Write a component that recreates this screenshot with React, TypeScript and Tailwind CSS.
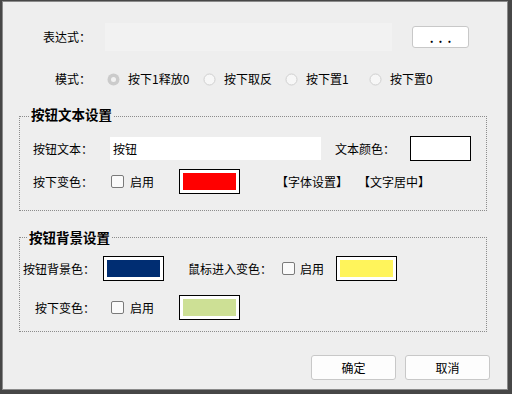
import React from "react";

const font = { fontFamily: '"Noto Sans CJK SC", "Noto Sans", sans-serif' };

function Radio({ checked, label, w }: { checked?: boolean; label: string; w: string }) {
  return (
    <div className={`flex items-center ${w}`}>
      <svg width="13" height="13" viewBox="0 0 13 13" className="shrink-0">
        {checked ? (
          <>
            <circle cx="6.5" cy="6.5" r="6" fill="#cbcbcb" />
            <circle cx="6.5" cy="6.5" r="2.5" fill="#f2f2f2" />
          </>
        ) : (
          <circle cx="6.5" cy="6.5" r="5.5" fill="#f7f7f7" stroke="#d0d0d0" strokeWidth="1" />
        )}
      </svg>
      <span className="ml-[8px] whitespace-nowrap">{label}</span>
    </div>
  );
}

function Check() {
  return <div className="w-[13px] h-[13px] shrink-0 rounded-[2px] border border-[#7a7a7a] bg-[#fafafa]" />;
}

function Swatch({ color }: { color: string }) {
  return (
    <div className="w-[61px] h-[25px] shrink-0 border border-black bg-white p-[3px]">
      <div className="w-full h-full" style={{ background: color }} />
    </div>
  );
}

export default function App() {
  return (
    <div
      className="w-[512px] h-[394px] flex border-l-2 border-t border-r-[4px] border-b-[4px] border-[#474747] text-[12px] text-black"
      style={font}
    >
      <div className="flex-1 h-full flex flex-col bg-[#eeeeee] border-l border-t border-r border-b border-[#8a8a8a]">
        {/* expression row */}
        <div className="mt-[21px] h-[28px] flex items-center">
          <div className="w-[88px] text-right leading-none">表达式：</div>
          <div className="ml-[14px] w-[287px] h-[28px] bg-[#f2f2f2]" />
          <button className="ml-[20px] w-[57px] h-[22px] rounded-[3px] border border-[#c8c8c8] bg-white flex items-center justify-center leading-none tracking-[5px] pl-[5px] pt-[2px] font-bold">
            ...
          </button>
        </div>

        {/* mode row */}
        <div className="mt-[18px] h-[20px] flex items-center leading-none">
          <div className="w-[88px] text-right">模式：</div>
          <div className="ml-[16px] flex items-center">
            <Radio checked label="按下1释放0" w="w-[96px]" />
            <Radio label="按下取反" w="w-[82px]" />
            <Radio label="按下置1" w="w-[84px]" />
            <Radio label="按下置0" w="w-[84px]" />
          </div>
        </div>

        {/* group 1 */}
        <div className="relative mt-[27px] ml-[16px] w-[468px] h-[95px] shrink-0 border border-dotted border-[#8c8c8c]">
          <div className="absolute left-[10px] top-[-10px] px-[1px] bg-[#eeeeee] font-bold text-[13.5px] leading-[14px] h-[14px]">
            按钮文本设置
          </div>
          <div className="mt-[19px] pl-[13px] h-[25px] flex items-center leading-none">
            <div className="w-[60px] whitespace-nowrap">按钮文本：</div>
            <div className="ml-[17px] w-[211px] h-[23px] bg-white flex items-center pl-[3px]">按钮</div>
            <div className="ml-[14px] w-[60px] whitespace-nowrap">文本颜色：</div>
            <div className="ml-[15px] w-[61px] h-[25px] border border-black bg-white" />
          </div>
          <div className="mt-[8px] pl-[13px] h-[25px] flex items-center leading-none">
            <div className="w-[60px] whitespace-nowrap">按下变色：</div>
            <div className="ml-[18px]">
              <Check />
            </div>
            <span className="ml-[6px]">启用</span>
            <div className="ml-[25px]">
              <Swatch color="#ff0000" />
            </div>
            <span className="ml-[36px] whitespace-nowrap">【字体设置】</span>
            <span className="ml-[10px] whitespace-nowrap">【文字居中】</span>
          </div>
        </div>

        {/* group 2 */}
        <div className="relative mt-[26px] ml-[16px] w-[468px] h-[95px] shrink-0 border border-dotted border-[#8c8c8c]">
          <div className="absolute left-[8px] top-[-8px] px-[1px] bg-[#eeeeee] font-bold text-[13.5px] leading-[14px] h-[14px]">
            按钮背景设置
          </div>
          <div className="mt-[18px] pl-[3px] h-[25px] flex items-center leading-none">
            <div className="w-[72px] whitespace-nowrap">按钮背景色：</div>
            <div className="ml-[8px]">
              <Swatch color="#002d72" />
            </div>
            <div className="ml-[24px] w-[84px] whitespace-nowrap">鼠标进入变色：</div>
            <div className="ml-[10px]">
              <Check />
            </div>
            <span className="ml-[5px]">启用</span>
            <div className="ml-[12px]">
              <Swatch color="#fff45b" />
            </div>
          </div>
          <div className="mt-[14px] pl-[15px] h-[25px] flex items-center leading-none">
            <div className="w-[60px] whitespace-nowrap">按下变色：</div>
            <div className="ml-[16px]">
              <Check />
            </div>
            <span className="ml-[6px]">启用</span>
            <div className="ml-[25px]">
              <Swatch color="#cde095" />
            </div>
          </div>
        </div>

        {/* footer */}
        <div className="mt-[23px] pr-[17px] flex justify-end gap-[9px]">
          <button className="w-[85px] h-[25px] rounded-[3px] border border-[#c8c8c8] bg-[#fdfdfd] leading-none">确定</button>
          <button className="w-[85px] h-[25px] rounded-[3px] border border-[#c8c8c8] bg-[#fdfdfd] leading-none">取消</button>
        </div>
      </div>
    </div>
  );
}
